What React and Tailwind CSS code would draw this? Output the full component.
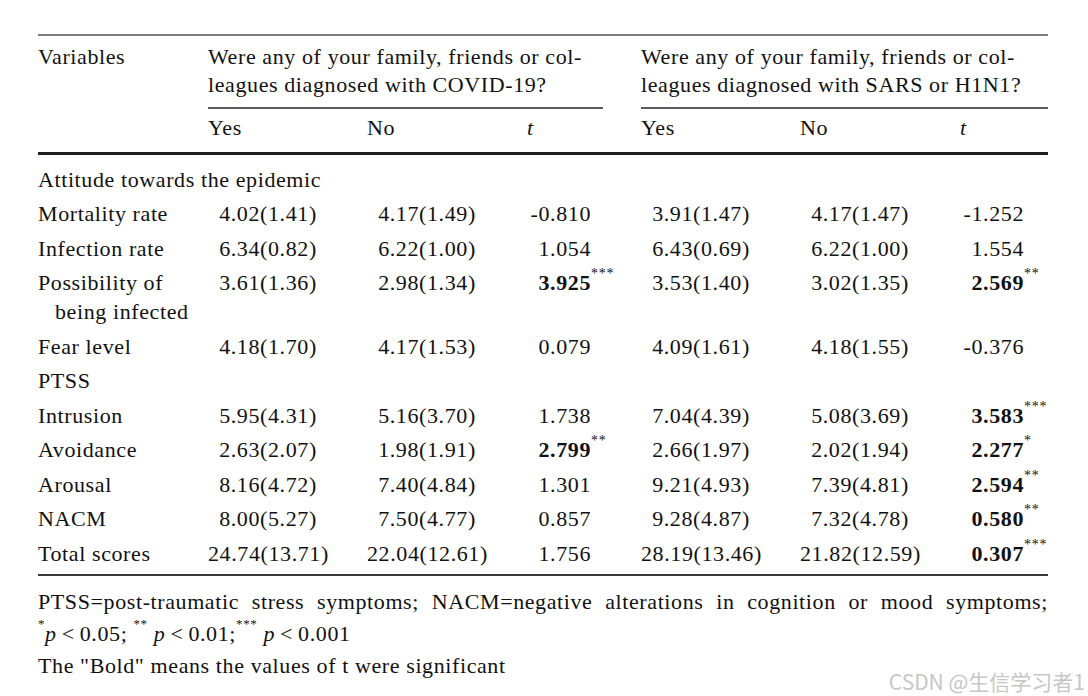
import React from "react";

const cols = "grid grid-cols-[170px_159px_160px_114px_159px_160px_88px]";

const attitude = [
  ["Mortality rate", "4.02(1.41)", "4.17(1.49)", ["-0.810"], "3.91(1.47)", "4.17(1.47)", ["-1.252"]],
  ["Infection rate", "6.34(0.82)", "6.22(1.00)", ["1.054"], "6.43(0.69)", "6.22(1.00)", ["1.554"]],
  [["Possibility of", "being infected"], "3.61(1.36)", "2.98(1.34)", ["3.925", "***"], "3.53(1.40)", "3.02(1.35)", ["2.569", "**"]],
  ["Fear level", "4.18(1.70)", "4.17(1.53)", ["0.079"], "4.09(1.61)", "4.18(1.55)", ["-0.376"]],
];

const ptss = [
  ["Intrusion", "5.95(4.31)", "5.16(3.70)", ["1.738"], "7.04(4.39)", "5.08(3.69)", ["3.583", "***"]],
  ["Avoidance", "2.63(2.07)", "1.98(1.91)", ["2.799", "**"], "2.66(1.97)", "2.02(1.94)", ["2.277", "*"]],
  ["Arousal", "8.16(4.72)", "7.40(4.84)", ["1.301"], "9.21(4.93)", "7.39(4.81)", ["2.594", "**"]],
  ["NACM", "8.00(5.27)", "7.50(4.77)", ["0.857"], "9.28(4.87)", "7.32(4.78)", ["0.580", "**"]],
  ["Total scores", "24.74(13.71)", "22.04(12.61)", ["1.756"], "28.19(13.46)", "21.82(12.59)", ["0.307", "***"]],
];

// t value: right aligned number, bold + stars when significant
function TCell({ t }) {
  const [v, stars] = t;
  return (
    <div className="whitespace-nowrap">
      <span className={`inline-block w-[64px] text-right ${stars ? "font-bold" : ""}`}>{v}</span>
      {stars && <sup className="text-[14px] leading-none tracking-[0.8px] align-[5px]">{stars}</sup>}
    </div>
  );
}

function Mean({ v }) {
  return <div className="w-[120px] text-center whitespace-nowrap">{v}</div>;
}

function Row({ r }) {
  const [label, y1, n1, t1, y2, n2, t2] = r;
  return (
    <div className={`${cols} py-[2.75px] leading-[29px]`}>
      <div>
        {Array.isArray(label) ? (
          <>
            <div>{label[0]}</div>
            <div className="pl-[17px]">{label[1]}</div>
          </>
        ) : (
          label
        )}
      </div>
      <Mean v={y1} />
      <Mean v={n1} />
      <TCell t={t1} />
      <Mean v={y2} />
      <Mean v={n2} />
      <TCell t={t2} />
    </div>
  );
}

function Section({ title }) {
  return <div className="py-[2.75px] leading-[29px]">{title}</div>;
}

export default function App() {
  return (
    <div className="relative w-[1088px] h-[696px] bg-white overflow-hidden text-[#111] font-['Liberation_Serif','Times_New_Roman',serif] text-[22px] tracking-[0.6px]">
      <div className="ml-[38px] w-[1010px] pt-[34px]">
        {/* header */}
        <div className="border-t-2 border-[#7d7d7d]">
          <div className={`${cols} pt-[7px] leading-[28px]`}>
            <div>Variables</div>
            <div className="col-span-3">
              <div>Were any of your family, friends or col-</div>
              <div>leagues diagnosed with COVID-19?</div>
              <div className="mt-[8px] h-[2px] w-[395px] bg-[#5a5a5a]"></div>
            </div>
            <div className="col-span-3">
              <div>Were any of your family, friends or col-</div>
              <div>leagues diagnosed with SARS or H1N1?</div>
              <div className="mt-[8px] h-[2px] w-full bg-[#5a5a5a]"></div>
            </div>
          </div>
          <div className={`${cols} pt-[5px] pb-[10px] leading-[28px]`}>
            <div></div>
            <div>Yes</div>
            <div>No</div>
            <div className="italic">t</div>
            <div>Yes</div>
            <div>No</div>
            <div className="italic">t</div>
          </div>
        </div>

        {/* body */}
        <div className="border-t-[3px] border-[#1e1e1e] pt-[7px] pb-[3px]">
          <Section title="Attitude towards the epidemic" />
          {attitude.map((r, i) => (
            <Row key={i} r={r} />
          ))}
          <Section title="PTSS" />
          {ptss.map((r, i) => (
            <Row key={i} r={r} />
          ))}
        </div>

        {/* notes */}
        <div className="border-t-2 border-[#3a3a3a] pt-[10px] leading-[32px]">
          <div className="text-justify [text-align-last:justify]">
            PTSS=post-traumatic stress symptoms; NACM=negative alterations in cognition or mood symptoms;
          </div>
          <div className="whitespace-nowrap">
            <sup className="text-[13px] leading-none align-[6px]">*</sup>
            <i>p</i>&thinsp;&lt;&thinsp;0.05;{" "}
            <sup className="text-[13px] leading-none align-[6px]">**</sup> <i>p</i>&thinsp;&lt;&thinsp;0.01;
            <sup className="text-[13px] leading-none align-[6px]">***</sup> <i>p</i>&thinsp;&lt;&thinsp;0.001
          </div>
          <div>The "Bold" means the values of t were significant</div>
        </div>
      </div>

      <div className="absolute right-[3px] bottom-[1px] text-[21px] leading-[28px] tracking-normal text-[#c6c6c6] font-['Noto_Sans_CJK_SC','Noto_Sans',sans-serif]">
        CSDN @生信学习者1
      </div>
    </div>
  );
}
